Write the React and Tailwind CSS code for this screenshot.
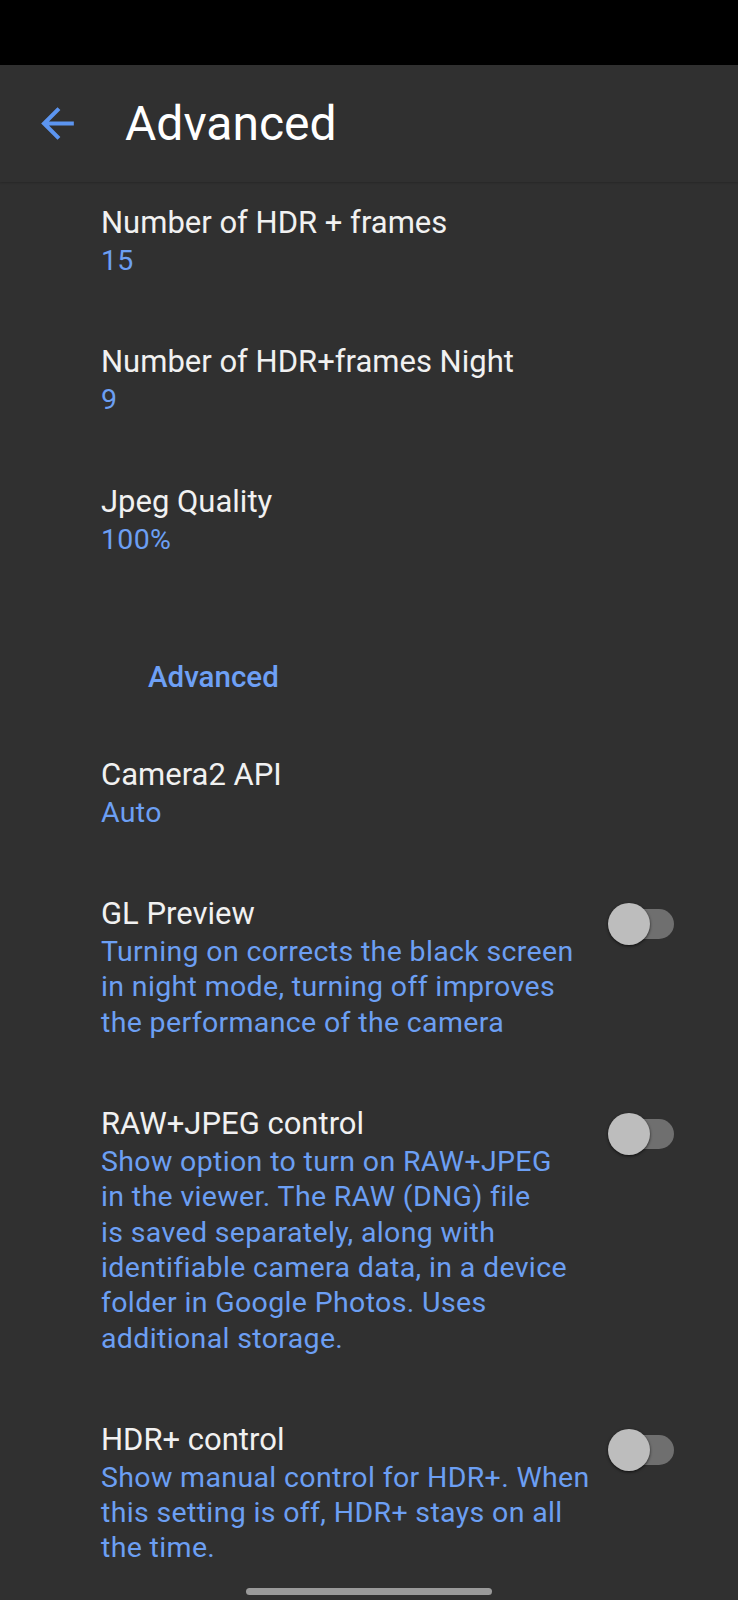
import React from "react";

const FONT = { fontFamily: "Roboto, 'Noto Sans', sans-serif" };

function BackArrow() {
  return (
    <svg viewBox="0 0 24 24" className="w-[49px] h-[49px]" fill="#5c95f0">
      <path d="M20 11H7.83l5.59-5.59L12 4l-8 8 8 8 1.41-1.41L7.83 13H20v-2z" />
    </svg>
  );
}

function Toggle() {
  return (
    <div className="relative w-[66px] h-[42px] shrink-0 mt-[9px]">
      <div className="absolute left-[8px] right-0 top-[6px] h-[30px] rounded-full bg-[#6f6f6f]" />
      <div className="absolute left-0 top-0 w-[42px] h-[42px] rounded-full bg-[#bdbdbd] shadow-[0_1px_3px_rgba(0,0,0,0.7)]" />
    </div>
  );
}

function Pref({ title, lines, toggle, first }) {
  return (
    <div className={`flex items-start pl-[101px] pr-[64px] ${first ? "pt-[21px]" : "pt-[32px]"} pb-[32px]`}>
      <div className="flex-1 min-w-0">
        <div className="text-[31px] leading-[40px] text-[#f1f1f1] whitespace-nowrap">{title}</div>
        <div className="text-[28.5px] leading-[35.3px] tracking-[0.35px] text-[#6c9ff3] whitespace-nowrap">
          {lines.map((l) => (
            <div key={l}>{l}</div>
          ))}
        </div>
      </div>
      {toggle && <Toggle />}
    </div>
  );
}

export default function App() {
  return (
    <div className="relative w-[738px] h-[1600px] overflow-hidden bg-[#303030]" style={FONT}>
      <div className="h-[65px] bg-black" />
      <div className="h-[117px] flex items-center bg-[#303030] shadow-[0_1px_2px_rgba(0,0,0,0.2)] relative z-10">
        <div className="ml-[33px] flex items-center">
          <BackArrow />
        </div>
        <div className="ml-[43px] text-[48px] leading-none text-white">Advanced</div>
      </div>

      <Pref first title="Number of HDR + frames" lines={["15"]} />
      <Pref title="Number of HDR+frames Night" lines={["9"]} />
      <Pref title="Jpeg Quality" lines={["100%"]} />

      <div className="pl-[148px] pt-[69px] pb-[27px] text-[29.5px] leading-[38px] font-medium text-[#6ea0f5]">
        Advanced
      </div>

      <Pref title="Camera2 API" lines={["Auto"]} />
      <Pref
        toggle
        title="GL Preview"
        lines={[
          "Turning on corrects the black screen",
          "in night mode, turning off improves",
          "the performance of the camera",
        ]}
      />
      <Pref
        toggle
        title="RAW+JPEG control"
        lines={[
          "Show option to turn on RAW+JPEG",
          "in the viewer. The RAW (DNG) file",
          "is saved separately, along with",
          "identifiable camera data, in a device",
          "folder in Google Photos. Uses",
          "additional storage.",
        ]}
      />
      <Pref
        toggle
        title="HDR+ control"
        lines={[
          "Show manual control for HDR+. When",
          "this setting is off, HDR+ stays on all",
          "the time.",
        ]}
      />

      <div className="absolute left-[246px] top-[1588px] w-[246px] h-[7px] rounded-full bg-[#9a9a9a]" />
    </div>
  );
}
